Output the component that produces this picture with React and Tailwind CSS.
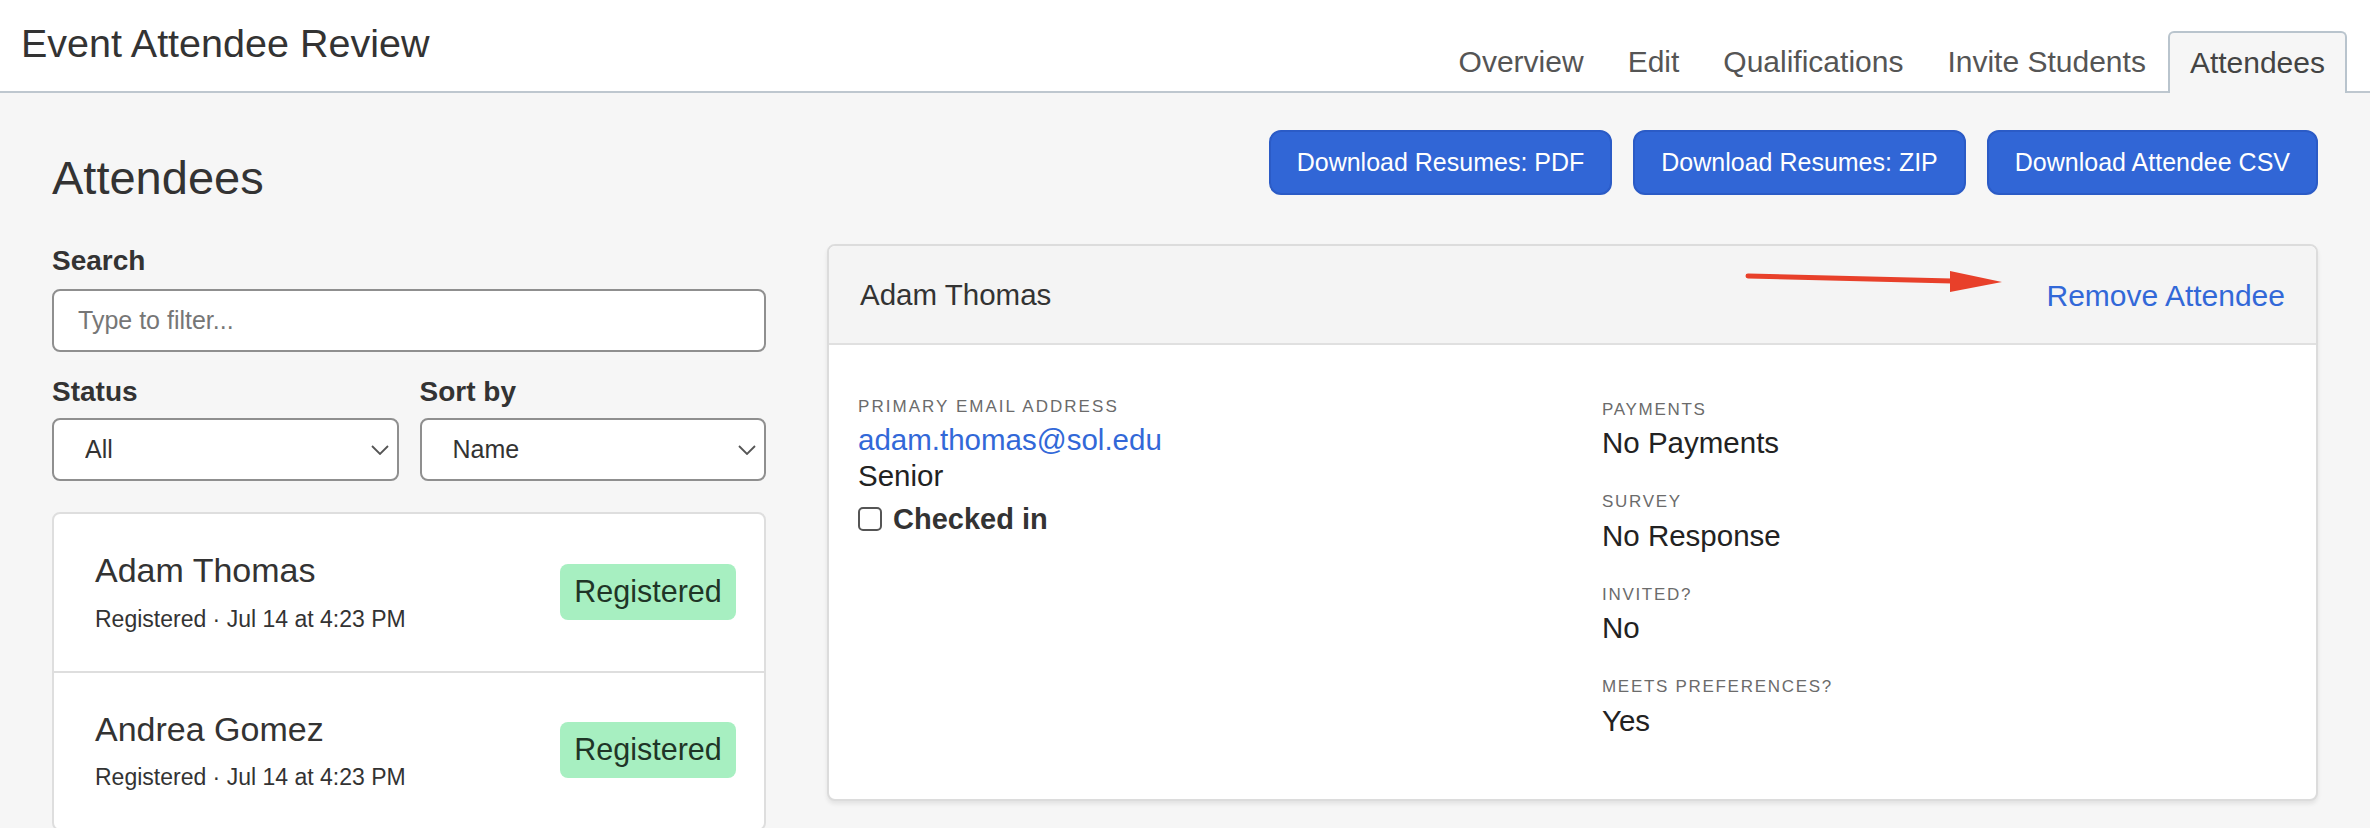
import React from "react";

const tabs = ["Overview", "Edit", "Qualifications", "Invite Students", "Attendees"];

const attendees = [
  { name: "Adam Thomas", when: "Registered · Jul 14 at 4:23 PM", status: "Registered" },
  { name: "Andrea Gomez", when: "Registered · Jul 14 at 4:23 PM", status: "Registered" },
];

const details = [
  { label: "Payments", value: "No Payments" },
  { label: "Survey", value: "No Response" },
  { label: "Invited?", value: "No" },
  { label: "Meets Preferences?", value: "Yes" },
];

function Chevron() {
  return (
    <svg
      className="pointer-events-none absolute right-[10px] top-[27px]"
      width="18"
      height="10"
      viewBox="0 0 18 10"
      fill="none"
    >
      <path d="M1 1l8 8 8-8" stroke="#555" strokeWidth="1.8" />
    </svg>
  );
}

function Select({ value }) {
  return (
    <div className="relative mt-[10px]">
      <select
        defaultValue={value}
        className="h-[63px] w-full appearance-none rounded-[8px] border-2 border-[#8f8f8f] bg-white pl-[31px] text-[25px] text-[#333] outline-none"
      >
        <option>{value}</option>
      </select>
      <Chevron />
    </div>
  );
}

export default function App() {
  return (
    <div className="min-h-screen bg-[#f6f6f6] font-['Liberation_Sans',Arial,sans-serif] text-[#333]">
      {/* top bar */}
      <div className="flex h-[93px] items-end justify-between border-b-2 border-[#bec7cf] bg-white">
        <h2 className="self-start pl-[21px] pt-[20px] text-[39.5px] leading-[1.2] text-[#333]">
          Event Attendee Review
        </h2>
        <nav className="mb-[-2px] mr-[23px] flex items-end">
          {tabs.map((t) =>
            t === "Attendees" ? (
              <div
                key={t}
                className="flex h-[62px] items-center rounded-t-[6px] border-2 border-b-0 border-[#b9c4cd] bg-[#f6f6f6] px-[20px] text-[30px] leading-[1.2] text-[#444]"
              >
                {t}
              </div>
            ) : (
              <div
                key={t}
                className="flex h-[62px] items-center px-[22px] text-[30px] leading-[1.2] text-[#555]"
              >
                {t}
              </div>
            )
          )}
        </nav>
      </div>

      <main className="px-[52px] pt-[37px]">
        <div className="flex items-start justify-between">
          <h1 className="mt-[24px] text-[47px] leading-none font-medium text-[#333]">Attendees</h1>
          <div className="flex gap-[21px]">
            {["Download Resumes: PDF", "Download Resumes: ZIP", "Download Attendee CSV"].map((b) => (
              <button
                key={b}
                className="h-[65px] rounded-[12px] border-2 border-[#2b5bc6] bg-[#3166d6] px-[26px] text-[25px] text-white"
              >
                {b}
              </button>
            ))}
          </div>
        </div>

        <div className="mt-[43px] flex items-start gap-[61px]">
          {/* filters + list */}
          <div className="w-[714px] shrink-0">
            <label className="block text-[28px] leading-[1.2] font-semibold text-[#333]">Search</label>
            <input
              placeholder="Type to filter..."
              className="mt-[11px] h-[63px] w-full rounded-[8px] border-2 border-[#8f8f8f] bg-white px-[24px] text-[25px] outline-none placeholder:text-[#767676]"
            />
            <div className="mt-[23px] grid grid-cols-2 gap-[21px]">
              <div>
                <label className="block text-[28px] leading-[1.2] font-semibold text-[#333]">Status</label>
                <Select value="All" />
              </div>
              <div>
                <label className="block text-[28px] leading-[1.2] font-semibold text-[#333]">Sort by</label>
                <Select value="Name" />
              </div>
            </div>

            <div className="mt-[31px] rounded-[8px] border-2 border-[#dedede] bg-white">
              {attendees.map((a, i) => (
                <div
                  key={a.name}
                  className={
                    "flex items-center justify-between pl-[41px] pr-[28px] pt-[36px] pb-[37px] " +
                    (i > 0 ? "border-t-2 border-[#dedede]" : "")
                  }
                >
                  <div>
                    <div className="text-[34px] leading-[1.2] font-medium text-[#333]">{a.name}</div>
                    <div className="mt-[15px] text-[23px] leading-[1.2] text-[#333]">{a.when}</div>
                  </div>
                  <span className="flex h-[56px] w-[176px] items-center justify-center rounded-[8px] bg-[#a7efc1] text-[30.5px] font-medium text-[#1f3527]">
                    {a.status}
                  </span>
                </div>
              ))}
            </div>
          </div>

          {/* detail card */}
          <div className="flex-1 overflow-hidden rounded-[8px] border-2 border-[#dcdcdc] bg-white shadow-[0_3px_4px_rgba(0,0,0,0.08)]">
            <div className="relative flex h-[99px] items-center justify-between border-b-2 border-[#e0e0e0] bg-[#f4f4f4] pl-[31px] pr-[31px]">
              <span className="text-[29.5px] leading-[1.2] text-[#333]">Adam Thomas</span>
              <a className="mt-[3px] text-[30px] leading-[1.2] text-[#3268d8]">Remove Attendee</a>
              <svg
                className="absolute right-[312px] top-[22px]"
                width="260"
                height="26"
                viewBox="0 0 260 26"
              >
                <path d="M4 8L208 13" stroke="#e8402a" strokeWidth="5" strokeLinecap="round" />
                <polygon points="206,3 258,14 206,24" fill="#e8402a" />
              </svg>
            </div>

            <div className="grid grid-cols-[744px_1fr] pl-[29px] pr-[32px] pt-[52px] pb-[60px]">
              <div>
                <div className="text-[17px] leading-[1.2] tracking-[0.12em] text-[#6b6b6b] uppercase">
                  Primary Email Address
                </div>
                <a className="mt-[5px] block text-[29.5px] leading-[36px] text-[#3268d8]">adam.thomas@sol.edu</a>
                <div className="text-[29.5px] leading-[36px] text-[#222]">Senior</div>
                <label className="mt-[7px] flex items-center gap-[11px]">
                  <span className="h-[24px] w-[24px] rounded-[5px] border-2 border-[#555] bg-white" />
                  <span className="text-[29px] leading-[36px] font-semibold text-[#333]">Checked in</span>
                </label>
              </div>
              <div className="pt-[3px]">
                {details.map((d, i) => (
                  <div key={d.label} className={i > 0 ? "mt-[31px]" : ""}>
                    <div className="text-[17px] leading-[1.2] tracking-[0.1em] text-[#6b6b6b] uppercase">
                      {d.label}
                    </div>
                    <div className="mt-[5px] text-[29.5px] leading-[36px] text-[#222]">{d.value}</div>
                  </div>
                ))}
              </div>
            </div>
          </div>
        </div>
      </main>
    </div>
  );
}
